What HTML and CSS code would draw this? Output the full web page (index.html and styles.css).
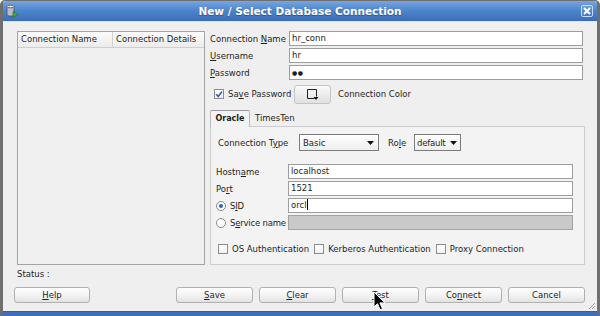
FILE: index.html
```html
<!DOCTYPE html>
<html lang="en">
  <head>
    <meta charset="UTF-8" />
    <title>New / Select Database Connection</title>
    <link rel="stylesheet" href="styles.css">
  </head>
  <body>
    <div class="window">
      <div class="titlebar">
        <svg class="app-icon" width="14" height="14" viewBox="0 0 14 14">
          <path d="M2 2.5v8c0 1 1.6 1.6 3.5 1.6S9 11.5 9 10.5v-8" fill="#b9bcc2" stroke="#4a4f58" stroke-width="0.8"/>
          <ellipse cx="5.5" cy="2.5" rx="3.5" ry="1.3" fill="#e6e8ec" stroke="#4a4f58" stroke-width="0.8"/>
          <path d="M8 7.5l5 3-5 3z" fill="#3cb043" stroke="#1d6b22" stroke-width="0.6"/>
        </svg>
        <span class="title">New / Select Database Connection</span>
        <span class="close">
          <svg width="8" height="8" viewBox="0 0 8 8"><path d="M1 1l6 6M7 1l-6 6" stroke="#fff" stroke-width="2"/></svg>
        </span>
      </div>

      <div class="content">
        <div class="main">
          <div class="conn-list">
            <div class="list-head">
              <span class="col-name">Connection Name</span>
              <span class="col-details">Connection Details</span>
            </div>
          </div>

          <div class="form">
            <div class="fields">
              <span>Connection <u>N</u>ame</span><div class="field">hr_conn</div>
              <span><u>U</u>sername</span><div class="field">hr</div>
              <span><u>P</u>assword</span><div class="field dots">●●</div>
            </div>

            <div class="save-row">
              <span class="check-item save-pass">
                <span class="check">
                  <svg width="8" height="8" viewBox="0 0 8 8"><path d="M1.2 4.2l2 2.2 3.8-5" fill="none" stroke="#2f63bd" stroke-width="1.6"/></svg>
                </span>
                Sa<u>v</u>e Password
              </span>
              <span class="color-btn">
                <svg width="13" height="13" viewBox="0 0 13 13"><path d="M8.5 10.5h-7v-9h9v7" fill="none" stroke="#222" stroke-width="1"/><path d="M7.5 9h5l-2.5 3z" fill="#111"/></svg>
              </span>
              <span>Connection Color</span>
            </div>

            <div class="tabs">
              <span class="tab active">Oracle</span>
              <span class="tab">TimesTen</span>
            </div>

            <div class="tab-panel">
              <div class="type-row">
                <span class="type-label">Connection T<u>y</u>pe</span>
                <span class="select type-select">Basic<svg class="arrow" width="7" height="4" viewBox="0 0 7 4"><path d="M0 0h7L3.5 4z" fill="#111"/></svg></span>
                <span class="role-label">Ro<u>l</u>e</span>
                <span class="select role-select">default<svg class="arrow" width="7" height="4" viewBox="0 0 7 4"><path d="M0 0h7L3.5 4z" fill="#111"/></svg></span>
              </div>

              <div class="host-fields">
                <span>Hostn<u>a</u>me</span><div class="field">localhost</div>
                <span>Po<u>r</u>t</span><div class="field">1521</div>
                <span class="radio-item"><span class="radio on"></span>S<u>I</u>D</span><div class="field">orcl<span class="caret"></span></div>
                <span class="radio-item"><span class="radio"></span>S<u>e</u>rvice name</span><div class="field disabled"></div>
              </div>

              <div class="auth-row">
                <span class="check-item"><span class="check"></span>OS Authentication</span>
                <span class="check-item"><span class="check"></span>Kerberos Authentication</span>
                <span class="check-item"><span class="check"></span>Proxy Connection</span>
              </div>
            </div>
          </div>
        </div>

        <div class="status">Status :</div>

        <div class="actions">
          <span class="btn"><u>H</u>elp</span>
          <div class="btn-group">
            <span class="btn"><u>S</u>ave</span>
            <span class="btn"><u>C</u>lear</span>
            <span class="btn"><u>T</u>est</span>
            <span class="btn">Co<u>n</u>nect</span>
            <span class="btn">Cancel</span>
          </div>
        </div>
      </div>

      <svg class="grip" width="8" height="8" viewBox="0 0 8 8">
        <path d="M7 1L1 7M7 4L4 7M7 6.5L6.5 7" stroke="#a0a0a0" stroke-width="1"/>
      </svg>
      <svg class="pointer" width="13" height="21" viewBox="0 0 13 21">
        <path d="M1 1v15l3.5-3.3 2.6 6 2.4-1-2.6-5.8H12z" fill="#000" stroke="#fff" stroke-width="1"/>
      </svg>
    </div>
  </body>
</html>
```

FILE: styles.css
```css
body {
  margin: 0;
  font-family: "DejaVu Sans", sans-serif;
  font-size: 8.5px;
  color: #1e1e1e;
  background: #fff;
}

u {
  text-underline-offset: 1px;
}

.window {
  position: relative;
  width: 600px;
  height: 316px;
  box-sizing: border-box;
  display: flex;
  flex-direction: column;
  background: #efefef;
  border: 3px solid #6f6f6f;
  border-top: 1px solid #6f6f6f;
  border-bottom: 4px solid #3f70b7;
  border-radius: 5px 5px 0 0;
  white-space: nowrap;
}

/* title bar */
.titlebar {
  display: flex;
  align-items: center;
  height: 20px;
  padding: 0 4px 0 2px;
  background: linear-gradient(#77a6e0, #4f86cd 45%, #3b6db5);
  border-bottom: 1px solid #dbe5f3;
  border-radius: 3px 3px 0 0;
}
.app-icon {
  flex: none;
}
.title {
  flex: 1;
  text-align: center;
  color: #fff;
  font-weight: bold;
  font-size: 10.5px;
  text-shadow: 0 1px 1px rgba(0, 0, 0, 0.35);
}
.close {
  width: 12px;
  height: 12px;
  box-sizing: border-box;
  display: flex;
  align-items: center;
  justify-content: center;
  border: 1px solid #c9daf1;
  border-radius: 2px;
  background: linear-gradient(#6c9ddc, #4377c0);
}

/* body */
.content {
  flex: 1;
  display: flex;
  flex-direction: column;
  padding: 9px 12px 0 11px;
  border-bottom: 1px solid #5a5a5a;
}

.main {
  display: flex;
  gap: 5px;
  height: 234px;
  margin-left: 3px;
}

.conn-list {
  width: 188px;
  box-sizing: border-box;
  border: 1px solid #a4a4a4;
  background: #f0f0f0;
}
.list-head {
  display: flex;
  height: 16px;
  box-sizing: border-box;
  border-bottom: 1px solid #cfcfcf;
  background: linear-gradient(#fbfbfb, #ececec);
}
.list-head span {
  padding-left: 3px;
  line-height: 15px;
}
.col-name {
  width: 91px;
  border-right: 1px solid #d2d2d2;
}

.form {
  width: 375px;
  display: flex;
  flex-direction: column;
}

.fields {
  display: grid;
  grid-template-columns: 79px 294px;
  row-gap: 2px;
  align-items: center;
}
.field {
  height: 15px;
  box-sizing: border-box;
  border: 1px solid #9d9d9d;
  background: #fff;
  padding-left: 2px;
  line-height: 13px;
}
.field.dots {
  font-size: 6px;
  letter-spacing: 0.5px;
}
.field.disabled {
  background: #c9c9c9;
  border-color: #a3a3a3;
}
.caret {
  display: inline-block;
  width: 1px;
  height: 11px;
  background: #000;
  vertical-align: -2px;
}

.save-row {
  display: flex;
  align-items: center;
  height: 20px;
  margin-top: 4px;
  padding-left: 4px;
}
.check-item {
  display: flex;
  align-items: center;
}
.save-pass {
  width: 80px;
}
.check {
  width: 10px;
  height: 10px;
  box-sizing: border-box;
  display: flex;
  align-items: center;
  justify-content: center;
  margin-right: 4px;
  border: 1px solid #8d8d8d;
  background: linear-gradient(#ffffff, #f1f1f1);
}
.color-btn {
  width: 37px;
  height: 19px;
  box-sizing: border-box;
  display: flex;
  align-items: center;
  justify-content: center;
  margin-right: 7px;
  border: 1px solid #c4c4c4;
  border-radius: 3px;
  background: linear-gradient(#fbfbfb, #e9e9e9 60%, #e1e1e1);
}

/* tabs */
.tabs {
  display: flex;
  align-items: flex-end;
  height: 17px;
  margin-top: 5px;
}
.tab {
  line-height: 16px;
  margin-left: 5px;
}
.tab.active {
  position: relative;
  z-index: 1;
  width: 40px;
  height: 17px;
  box-sizing: border-box;
  margin: 0 0 -1px 0;
  text-align: center;
  font-weight: bold;
  font-size: 8px;
  border: 1px solid #b9b9b9;
  border-bottom: none;
  border-top-color: #9a9a9a;
  border-radius: 2px 2px 0 0;
  background: #f3f3f3;
}
.tab-panel {
  flex: 1;
  display: flex;
  flex-direction: column;
  border: 1px solid #cdcdcd;
  background: #f3f3f3;
}

.type-row {
  display: flex;
  align-items: center;
  height: 17px;
  margin-top: 7px;
  padding-left: 7px;
}
.type-label {
  width: 81px;
}
.role-label {
  width: 26px;
  margin-left: 9px;
}
.select {
  height: 17px;
  box-sizing: border-box;
  display: flex;
  align-items: center;
  justify-content: space-between;
  padding: 0 4px 0 3px;
  border: 1px solid #7c7c7c;
  background: linear-gradient(#ffffff, #eeeeee);
}
.type-select {
  width: 80px;
}
.role-select {
  width: 47px;
  padding: 0 3px 0 2px;
  letter-spacing: -0.2px;
}

.host-fields {
  display: grid;
  grid-template-columns: 72px 285px;
  row-gap: 2px;
  align-items: center;
  margin-top: 13px;
  padding-left: 5px;
}
.radio-item {
  display: flex;
  align-items: center;
  letter-spacing: -0.2px;
}
.radio {
  width: 10px;
  height: 10px;
  box-sizing: border-box;
  display: flex;
  align-items: center;
  justify-content: center;
  margin-right: 4px;
  border: 1px solid #8a8a8a;
  border-radius: 50%;
  background: #fff;
}
.radio.on::after {
  content: "";
  width: 4px;
  height: 4px;
  border-radius: 50%;
  background: #2f63bd;
}

.auth-row {
  display: flex;
  align-items: center;
  gap: 5px;
  height: 11px;
  margin-top: 13px;
  padding-left: 7px;
}

.status {
  margin-top: 3px;
  padding-left: 3px;
  line-height: 12px;
}

.actions {
  display: flex;
  margin-top: 7px;
}
.btn-group {
  display: flex;
  gap: 6px;
  margin-left: auto;
}
.btn {
  width: 76px;
  height: 16px;
  box-sizing: border-box;
  text-align: center;
  line-height: 14px;
  border: 1px solid #b0b0b0;
  border-radius: 3px;
  background: linear-gradient(#fefefe, #f4f4f4 50%, #e2e2e2);
}
.btn-group .btn {
  width: 77px;
}

.grip {
  position: absolute;
  right: 1px;
  bottom: 2px;
}
.pointer {
  position: absolute;
  left: 370px;
  top: 290px;
}
```
